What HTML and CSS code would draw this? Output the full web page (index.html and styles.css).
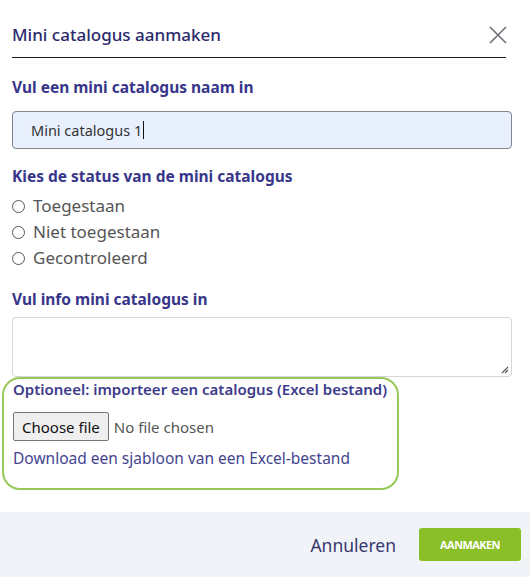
FILE: index.html
```html
<!DOCTYPE html>
<html>
<head>
<meta charset="utf-8">
<link rel="stylesheet" href="styles.css">
</head>
<body>
<div class="modal">
  <div class="header">
    <h1 class="title">Mini catalogus aanmaken</h1>
    <svg class="close" width="18" height="18" viewBox="0 0 18 18"><path d="M1 1 L17 17 M17 1 L1 17" stroke="#6b6f75" stroke-width="1.6" fill="none"/></svg>
  </div>
  <div class="body">
    <div class="label l1">Vul een mini catalogus naam in</div>
    <div class="input"><span>Mini catalogus 1</span><span class="caret"></span></div>

    <div class="label l2">Kies de status van de mini catalogus</div>
    <div class="radios">
      <div class="radio"><span class="circle"></span>Toegestaan</div>
      <div class="radio"><span class="circle"></span>Niet toegestaan</div>
      <div class="radio"><span class="circle"></span>Gecontroleerd</div>
    </div>

    <div class="label l3">Vul info mini catalogus in</div>
    <div class="textarea">
      <svg class="grip" width="9" height="9" viewBox="0 0 9 9"><path d="M8 2 L2 8 M8 5 L5 8" stroke="#555" stroke-width="1.1"/></svg>
    </div>
  </div>
  <div class="import">
    <div class="label l4">Optioneel: importeer een catalogus (Excel bestand)</div>
    <div class="filerow"><span class="filebtn">Choose file</span><span class="nofile">No file chosen</span></div>
    <div class="download">Download een sjabloon van een Excel-bestand</div>
  </div>
  <div class="footer">
    <span class="cancel">Annuleren</span>
    <span class="create">AANMAKEN</span>
  </div>
</div>
</body>
</html>
```
FILE: styles.css
```css
* { box-sizing: border-box; }
html, body { margin: 0; padding: 0; background: #fff; }
body { font-family: "Noto Sans", "Open Sans", sans-serif; width: 530px; height: 577px; overflow: hidden; }
.modal { display: flex; flex-direction: column; height: 577px; }
.header {
  margin: 0 24px 0 12px;
  height: 58px;
  border-bottom: 1.5px solid #1a1a1a;
  display: flex; align-items: center; justify-content: space-between;
  padding-top: 12px;
}
.title { margin: 0; font-size: 17px; font-weight: 500; color: #2b2a6b; line-height: 24px; }
.close { margin-right: -1px; }
.body { padding: 0 18px 0 12px; }
.label { font-size: 15.5px; font-weight: 700; color: #38368a; line-height: 20px; }
.l1 { margin-top: 19px; }
.input {
  margin-top: 14px; height: 38px; border: 1.5px solid #80858c; border-radius: 4px;
  background: #e8f0fe; display: flex; align-items: center; padding-left: 18px;
  font-size: 14.5px; color: #333;
}
.caret { display: inline-block; width: 1px; height: 18px; background: #111; margin-left: 1px; }
.l2 { margin-top: 17px; }
.radios { margin-top: 7px; }
.radio { display: flex; align-items: center; font-size: 17px; color: #555; line-height: 26px; }
.circle { width: 13px; height: 13px; border: 1.2px solid #555; border-radius: 50%; margin-right: 8px; }
.l3 { margin-top: 18px; }
.textarea { margin-top: 8px; height: 60px; border: 1px solid #d3d5d8; border-radius: 4px; position: relative; }
.grip { position: absolute; right: 2px; bottom: 2px; }
.import {
  margin-left: 2px; width: 397px; height: 113px;
  border: 2px solid #96c95a; border-radius: 18px;
  padding: 0 0 0 9px;
}
.l4 { font-size: 15px; font-weight: 600; color: #3d3b8c; }
.filerow { display: flex; align-items: center; margin-top: 13px; }
.filebtn {
  font-size: 15px; color: #111; background: #efefef; border: 1px solid #777; border-radius: 2px;
  height: 29px; padding: 0 8px; display: flex; align-items: center;
}
.nofile { font-size: 15px; color: #555; margin-left: 5px; }
.download { margin-top: 7px; font-size: 15.5px; color: #43458f; line-height: 20px; }
.footer {
  margin-top: auto; height: 65px; background: #f0f3f8;
  display: flex; align-items: center; justify-content: flex-end; padding-right: 9px;
}
.cancel { font-size: 17.5px; color: #37376e; margin-right: 23px; }
.create {
  background: #8bbf2a; color: #fff; font-size: 11px; font-weight: 700; letter-spacing: -0.6px;
  width: 102px; height: 33px; border-radius: 3px; display: flex; align-items: center; justify-content: center;
}
```
